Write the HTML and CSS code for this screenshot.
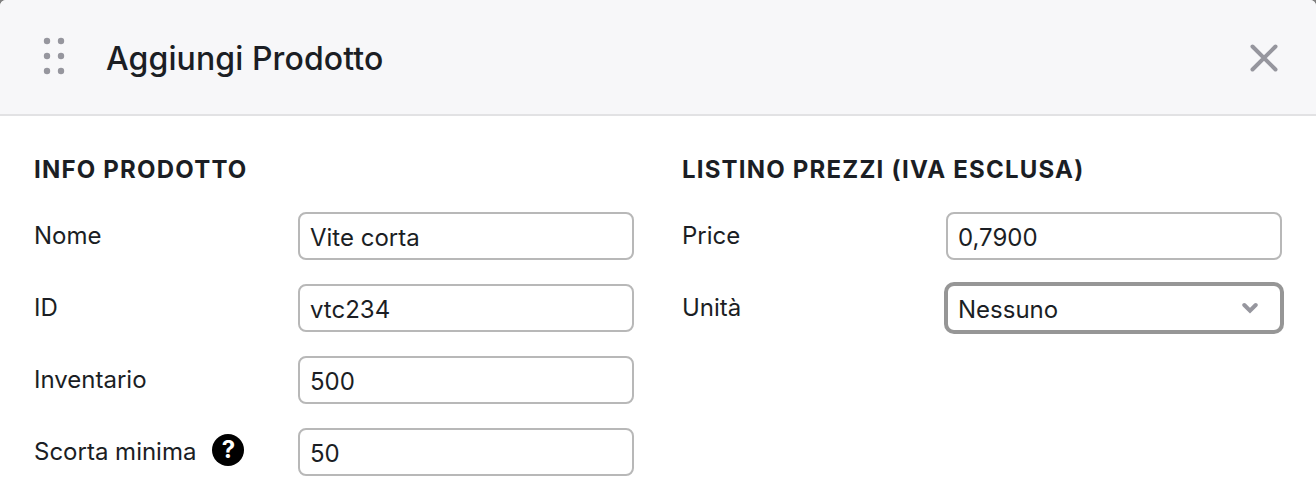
FILE: index.html
```html
<!DOCTYPE html>
<html lang="it">

<head>
    <meta charset="UTF-8">
    <meta name="viewport" content="width=device-width, initial-scale=1.0">
    <title>Aggiungi Prodotto</title>
    <link rel="stylesheet" href="styles.css">
</head>

<body>
    <div class="modal">
        <header class="modal-header">
            <svg class="drag-handle" width="22" height="38" viewBox="0 0 22 38" fill="#96969e">
                <circle cx="4" cy="4" r="3.2"/>
                <circle cx="18" cy="4" r="3.2"/>
                <circle cx="4" cy="19" r="3.2"/>
                <circle cx="18" cy="19" r="3.2"/>
                <circle cx="4" cy="34" r="3.2"/>
                <circle cx="18" cy="34" r="3.2"/>
            </svg>
            <h1 class="modal-title">Aggiungi Prodotto</h1>
            <button class="close" type="button" aria-label="Chiudi">
                <svg width="28" height="28" viewBox="0 0 28 28" fill="none" stroke="#96969e" stroke-width="4" stroke-linecap="round">
                    <path d="M2.5 2.5 25.5 25.5M25.5 2.5 2.5 25.5"/>
                </svg>
            </button>
        </header>

        <form class="modal-body">
            <section class="column">
                <h2 class="section-title">INFO PRODOTTO</h2>
                <div class="row">
                    <label class="label" for="nome">Nome</label>
                    <input class="field" id="nome" type="text" value="Vite corta">
                </div>
                <div class="row">
                    <label class="label" for="id">ID</label>
                    <input class="field" id="id" type="text" value="vtc234">
                </div>
                <div class="row">
                    <label class="label" for="inventario">Inventario</label>
                    <input class="field" id="inventario" type="text" value="500">
                </div>
                <div class="row">
                    <label class="label" for="scorta">Scorta minima <span class="help">?</span></label>
                    <input class="field" id="scorta" type="text" value="50">
                </div>
            </section>

            <section class="column">
                <h2 class="section-title">LISTINO PREZZI (IVA ESCLUSA)</h2>
                <div class="row">
                    <label class="label" for="price">Price</label>
                    <input class="field" id="price" type="text" value="0,7900">
                </div>
                <div class="row">
                    <span class="label">Unità</span>
                    <div class="field select" tabindex="0">
                        <span>Nessuno</span>
                        <svg class="chevron" width="16" height="12" viewBox="0 0 16 12" fill="none" stroke="#96969e" stroke-width="4" stroke-linecap="round">
                            <path d="M2.3 3 8 8.6 13.7 3"/>
                        </svg>
                    </div>
                </div>
            </section>
        </form>
    </div>
</body>

</html>
```
FILE: styles.css
```css
* {
    box-sizing: border-box;
}

body {
    margin: 0;
    background-color: #808080;
    color: #1b1e24;
    font-family: 'Inter', sans-serif;
    font-size: 24px;
    overflow: hidden;
}

.modal {
    height: 496px;
    background-color: #ffffff;
    border-radius: 6px 6px 0 0;
    overflow: hidden;
}

.modal-header {
    display: flex;
    align-items: center;
    height: 116px;
    padding: 0 38px 0 43px;
    background-color: #f7f7f9;
    border-bottom: 2px solid #e2e2e4;
}

.drag-handle {
    margin-bottom: 2px;
}

.modal-title {
    margin: 4px 0 0 41px;
    font-size: 32px;
    font-weight: 500;
    line-height: 40px;
    letter-spacing: 0.1px;
}

.close {
    display: flex;
    margin: 2px 0 0 auto;
    padding: 0;
    border: none;
    background: none;
}

.modal-body {
    display: grid;
    grid-template-columns: 600px 600px;
    column-gap: 48px;
    padding: 38px 34px 0;
}

.section-title {
    margin: 0 0 26px;
    font-size: 24px;
    font-weight: 700;
    line-height: 32px;
    letter-spacing: 1.2px;
}

.row {
    display: flex;
    justify-content: space-between;
    height: 48px;
    margin-bottom: 24px;
}

.label {
    display: flex;
    align-items: center;
    height: 46px;
}

.help {
    display: flex;
    align-items: center;
    justify-content: center;
    width: 32px;
    height: 32px;
    margin: -2px 0 0 16px;
    padding-bottom: 1px;
    border-radius: 50%;
    background-color: #000000;
    color: #ffffff;
    font-weight: 700;
}

.field {
    width: 336px;
    height: 48px;
    padding: 2px 10px 0;
    border: 2px solid #b8b8b8;
    border-radius: 8px;
    background-color: #ffffff;
    color: #1b1e24;
    font-family: inherit;
    font-size: 24px;
}

.select {
    display: flex;
    align-items: center;
    justify-content: space-between;
    padding-right: 22px;
    border-color: #969696;
    box-shadow: 0 0 0 2px #969696;
}

.chevron {
    margin-bottom: 2px;
}
```
